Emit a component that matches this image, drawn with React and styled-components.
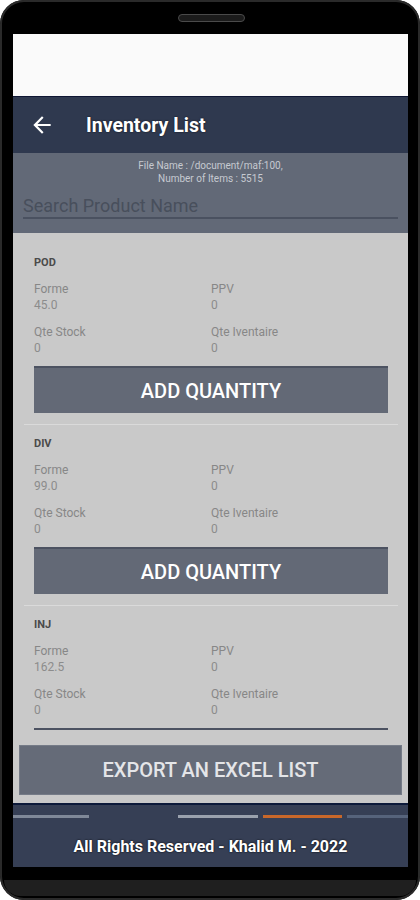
import React from "react";
import styled, { createGlobalStyle } from "styled-components";

const products = [
  { code: "POD", forme: "45.0", ppv: "0", stock: "0", inventaire: "0" },
  { code: "DIV", forme: "99.0", ppv: "0", stock: "0", inventaire: "0" },
  // last row is scrolled, only the top edge of its button shows
  { code: "INJ", forme: "162.5", ppv: "0", stock: "0", inventaire: "0", partial: true },
];

const segments = [
  { w: 76, c: "#7f8898" },
  { w: 89, c: "transparent" },
  { w: 80, c: "#9aa1ad" },
  { w: 5, c: "transparent" },
  { w: 79, c: "#c8672a" },
  { w: 5, c: "transparent" },
  { w: 61, c: "#56637b" },
];

function BackArrow() {
  return (
    <svg width="26" height="26" viewBox="0 0 24 24" fill="#ffffff">
      <path d="M20 11H7.83l5.59-5.59L12 4l-8 8 8 8 1.41-1.41L7.83 13H20v-2z" />
    </svg>
  );
}

export default function App() {
  return (
    <>
      <GlobalStyle />
      <Phone>
        <Speaker />
        <Screen>
          <StatusArea />
          <Header>
            <BackArrow />
            <Title>Inventory List</Title>
          </Header>
          <Info>
            <InfoLine>File Name : /document/maf:100,</InfoLine>
            <InfoLine>Number of Items : 5515</InfoLine>
            <Search placeholder="Search Product Name" />
          </Info>
          <List>
            {products.map((p) => (
              <Item key={p.code}>
                <Code>{p.code}</Code>
                <Fields>
                  <Field>
                    <FieldLabel>Forme</FieldLabel>
                    <FieldValue>{p.forme}</FieldValue>
                  </Field>
                  <Field>
                    <FieldLabel>PPV</FieldLabel>
                    <FieldValue>{p.ppv}</FieldValue>
                  </Field>
                  <Field>
                    <FieldLabel>Qte Stock</FieldLabel>
                    <FieldValue>{p.stock}</FieldValue>
                  </Field>
                  <Field>
                    <FieldLabel>Qte Iventaire</FieldLabel>
                    <FieldValue>{p.inventaire}</FieldValue>
                  </Field>
                </Fields>
                <AddButton>{p.partial ? null : "ADD QUANTITY"}</AddButton>
              </Item>
            ))}
          </List>
          <ExportArea>
            <ExportButton>EXPORT AN EXCEL LIST</ExportButton>
          </ExportArea>
          <Footer>
            <Segments>
              {segments.map((s, i) => (
                <Segment key={i} $w={s.w} $c={s.c} />
              ))}
            </Segments>
            <FooterText>All Rights Reserved - Khalid M. - 2022</FooterText>
          </Footer>
        </Screen>
        <Chin />
      </Phone>
    </>
  );
}

const GlobalStyle = createGlobalStyle`
  body {
    margin: 0;
    background: #ffffff;
    font-family: Roboto, "Liberation Sans", sans-serif;
  }
`;

const Phone = styled.div`
  position: relative;
  width: 420px;
  height: 900px;
  box-sizing: border-box;
  padding: 34px 12px 0 13px;
  background: #000000;
  border-radius: 24px;
  box-shadow: inset 0 0 0 2px #2a2a2a;
  display: flex;
  flex-direction: column;
`;

const Speaker = styled.div`
  position: absolute;
  top: 14px;
  left: 178px;
  width: 65px;
  height: 6px;
  border-radius: 4px;
  background: #1b1b1b;
  border: 1px solid #4a4a4a;
`;

const Screen = styled.div`
  height: 833px;
  display: flex;
  flex-direction: column;
  overflow: hidden;
`;

const StatusArea = styled.div`
  height: 62px;
  background: #fafafa;
  border-bottom: 1px solid #0e1633;
`;

const Header = styled.div`
  height: 56px;
  display: flex;
  align-items: center;
  padding-left: 16px;
  background: #2f394f;
`;

const Title = styled.h1`
  margin: 0 0 0 31px;
  font-size: 19.5px;
  font-weight: 700;
  color: #ffffff;
  text-shadow: 0 0 2px rgba(0, 0, 0, 0.7);
`;

const Info = styled.div`
  height: 80px;
  box-sizing: border-box;
  padding: 6px 10px 0;
  background: #626977;
  display: flex;
  flex-direction: column;
`;

const InfoLine = styled.div`
  text-align: center;
  font-size: 10px;
  line-height: 13px;
  color: #c6cad1;
`;

const Search = styled.input`
  margin-top: 10px;
  height: 22px;
  padding: 0;
  border: none;
  border-bottom: 2px solid #4a5160;
  background: transparent;
  font-family: Roboto, "Liberation Sans", sans-serif;
  font-size: 18px;
  line-height: 22px;
  outline: none;
  &::placeholder {
    color: #484f5c;
  }
`;

const List = styled.div`
  height: 497px;
  box-sizing: border-box;
  padding: 11px 10px 0 11px;
  background: #c9c9c9;
  overflow: hidden;
`;

const Item = styled.div`
  padding: 12px 10px 11px;
  border-bottom: 1px solid #dadada;
`;

const Code = styled.div`
  font-size: 11px;
  line-height: 14px;
  font-weight: 700;
  color: #4b4b4b;
`;

const Fields = styled.div`
  display: grid;
  grid-template-columns: 1fr 1fr;
  row-gap: 11px;
  margin-top: 11px;
`;

const Field = styled.div`
  display: flex;
  flex-direction: column;
`;

const FieldLabel = styled.span`
  font-size: 12px;
  line-height: 16px;
  color: #878787;
`;

const FieldValue = styled.span`
  font-size: 12px;
  line-height: 16px;
  color: #8c8c8c;
`;

const AddButton = styled.button`
  display: block;
  width: 100%;
  height: 47px;
  margin-top: 10px;
  border: none;
  border-top: 2px solid #4c5261;
  background: #636976;
  color: #ffffff;
  font-family: Roboto, "Liberation Sans", sans-serif;
  font-size: 20px;
  font-weight: 500;
`;

const ExportArea = styled.div`
  height: 73px;
  box-sizing: border-box;
  padding: 15px 6px 8px;
  background: #c9c9c9;
`;

const ExportButton = styled.button`
  width: 100%;
  height: 50px;
  border: 1px solid #757b87;
  background: #656b78;
  color: #e4e5e8;
  font-family: Roboto, "Liberation Sans", sans-serif;
  font-size: 20px;
  font-weight: 500;
`;

const Footer = styled.div`
  height: 64px;
  box-sizing: border-box;
  background: #363f55;
  border-top: 2px solid #0d1a3a;
  display: flex;
  flex-direction: column;
`;

const Segments = styled.div`
  display: flex;
  margin-top: 10px;
`;

const Segment = styled.div`
  width: ${(p) => p.$w}px;
  height: 3px;
  background: ${(p) => p.$c};
`;

const FooterText = styled.div`
  margin-top: 19px;
  text-align: center;
  font-size: 16px;
  line-height: 20px;
  font-weight: 700;
  color: #ffffff;
  text-shadow: 0 0 2px #000000;
`;

const Chin = styled.div`
  margin: 13px -8px 0 -9px;
  height: 16px;
  background: #1f1f1f;
  border-radius: 0 0 20px 20px;
`;
